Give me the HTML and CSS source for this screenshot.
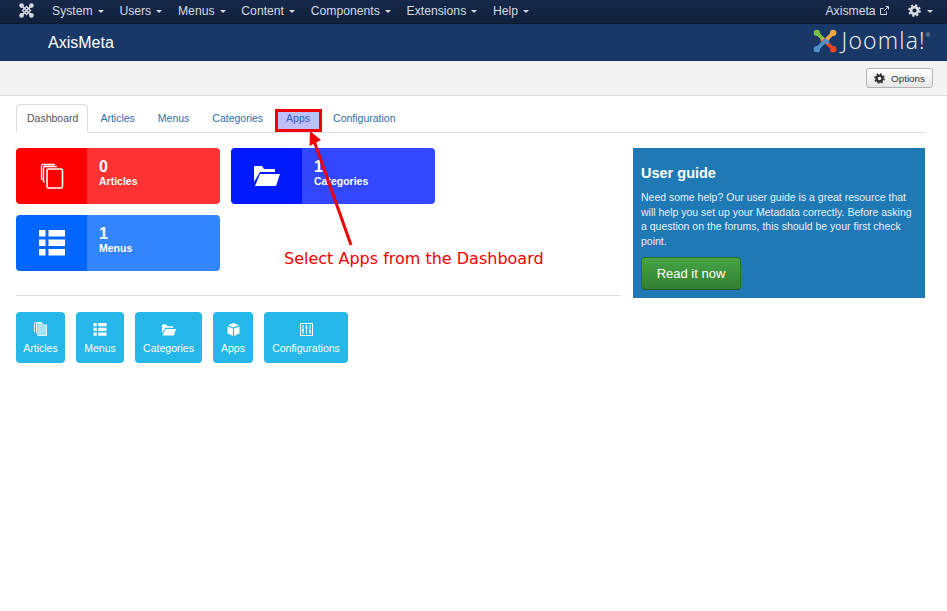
FILE: index.html
```html
<!DOCTYPE html>
<html lang="en">
<head>
<meta charset="UTF-8" />
<title>AxisMeta - Dashboard</title>
<link rel="stylesheet" href="styles.css">
</head>
<body>
<svg class="sprites" width="0" height="0">
  <symbol id="i-gear" viewBox="0 0 16 16">
    <g fill="none" stroke="currentColor">
      <circle cx="8" cy="8" r="4.300" stroke-width="3.400"/>
      <circle cx="8" cy="8" r="6.600" stroke-width="2.400" stroke-dasharray="2.600 2.584"/>
    </g>
  </symbol>
</svg>

<nav class="topbar">
  <svg class="topbar-logo" width="15" height="15" viewBox="0 0 15 15">
    <g fill="none" stroke="#d5dae2" stroke-width="1.700">
      <path d="M3 3l9 9M12 3l-9 9"/>
      <path d="M7.500 3.500l4 4-4 4-4-4z" stroke-width="1.300"/>
    </g>
    <g fill="#d5dae2">
      <circle cx="2.600" cy="2.600" r="2.300"/>
      <circle cx="12.400" cy="2.600" r="2.300"/>
      <circle cx="2.600" cy="12.400" r="2.300"/>
      <circle cx="12.400" cy="12.400" r="2.300"/>
    </g>
  </svg>
  <ul class="topmenu">
    <li>System<span class="caret"></span></li>
    <li>Users<span class="caret"></span></li>
    <li>Menus<span class="caret"></span></li>
    <li>Content<span class="caret"></span></li>
    <li>Components<span class="caret"></span></li>
    <li>Extensions<span class="caret"></span></li>
    <li>Help<span class="caret"></span></li>
  </ul>
  <div class="topbar-right">
    <span class="site-link">Axismeta
      <svg width="9" height="9" viewBox="0 0 9 9"><path fill="none" stroke="#d5dae2" stroke-width="1" d="M6.500 5.500v3H.500v-6h3M4 5l4-4M5.500.500h3v3"/></svg>
    </span>
    <span class="user-menu">
      <svg width="13" height="13"><use href="#i-gear"/></svg><span class="caret"></span>
    </span>
  </div>
</nav>

<header class="brandbar">
  <h1>AxisMeta</h1>
  <div class="brand-logo">
    <svg width="24" height="24" viewBox="0 0 25 25" fill="none" stroke-width="3.800">
      <path stroke="#7ac143" d="M4 4l9 9 3-3"/>
      <path stroke="#f9a541" d="M21 4l-9 9-3-3"/>
      <path stroke="#f44321" d="M21 21l-9-9-3 3"/>
      <path stroke="#5091cd" d="M4 21l9-9 3 3"/>
      <circle cx="4" cy="4" r="3.300" fill="#7ac143" stroke="none"/>
      <circle cx="21" cy="4" r="3.300" fill="#f9a541" stroke="none"/>
      <circle cx="21" cy="21" r="3.300" fill="#f44321" stroke="none"/>
      <circle cx="4" cy="21" r="3.300" fill="#5091cd" stroke="none"/>
    </svg>
    <span class="brand-name">Joomla!<sup>®</sup></span>
  </div>
</header>

<div class="toolbar">
  <button class="options-btn"><svg width="11" height="11"><use href="#i-gear"/></svg>Options</button>
</div>

<main class="content">
  <ul class="tabs">
    <li class="active">Dashboard</li>
    <li>Articles</li>
    <li>Menus</li>
    <li>Categories</li>
    <li class="apps-tab">Apps</li>
    <li>Configuration</li>
  </ul>

  <div class="columns">
    <section class="left-col">
      <div class="tiles">
        <div class="tile tile-red">
          <div class="tile-icon">
            <svg width="24" height="26" viewBox="0 0 24 26" fill="none" stroke="#fff" stroke-width="1.300"><path d="M15 1.500H2.500a1.500 1.500 0 0 0-1 1V15a2 2 0 0 0 1 2M17 3.500H5a1.500 1.500 0 0 0-1.500 1.500V18a2 2 0 0 0 1 1.500"/><rect x="7" y="6" width="15.500" height="19" rx="1.500" stroke-width="1.600"/></svg>
          </div>
          <div class="tile-body"><b>0</b><span>Articles</span></div>
        </div>
        <div class="tile tile-blue">
          <div class="tile-icon">
            <svg width="26" height="22" viewBox="0 0 26 22" fill="#fff"><path d="M0 2q0-1 1-1h7l2 3h10q1 0 1 1v2H6L0 17z"/><path d="M1 21l5-12h20l-4 12z"/></svg>
          </div>
          <div class="tile-body"><b>1</b><span>Categories</span></div>
        </div>
        <div class="tile tile-sky">
          <div class="tile-icon">
            <svg width="26" height="26" viewBox="0 0 26 26" fill="#fff"><path d="M0 0h6.500v6.500H0zM9.500 0H26v6.500H9.500zM0 9.500h6.500V16H0zM9.500 9.500H26V16H9.500zM0 19h6.500v6.500H0zM9.500 19H26v6.500H9.500z"/></svg>
          </div>
          <div class="tile-body"><b>1</b><span>Menus</span></div>
        </div>
      </div>

      <hr class="divider">

      <div class="quick-links">
        <a class="quick">
          <svg width="13" height="14" viewBox="0 0 13 14" fill="none" stroke="#fff" stroke-width="1" opacity=".85"><path d="M8 .500H1a.500.500 0 0 0-.500.500v9"/><path d="M9 1.500H2.500v10"/><rect x="4" y="3" width="8.500" height="10.500" fill="#bfe8f7"/></svg>
          Articles</a>
        <a class="quick">
          <svg width="14" height="13" viewBox="0 0 26 26" fill="#fff"><path d="M0 0h6.500v6.500H0zM9.500 0H26v6.500H9.500zM0 9.500h6.500V16H0zM9.500 9.500H26V16H9.500zM0 19h6.500v6.500H0zM9.500 19H26v6.500H9.500z"/></svg>
          Menus</a>
        <a class="quick">
          <svg width="14" height="12" viewBox="0 0 26 22" fill="#fff"><path d="M0 2q0-1 1-1h7l2 3h10q1 0 1 1v2H6L0 17z"/><path d="M1 21l5-12h20l-4 12z"/></svg>
          Categories</a>
        <a class="quick">
          <svg width="13" height="13" viewBox="0 0 13 13" fill="#fff"><path d="M6.500 0L12 2.200 6.500 4.400 1 2.200zM.500 3.400l5.500 2.200V13L.500 10.600zM12.500 3.400L7 5.600V13l5.500-2.400z"/></svg>
          Apps</a>
        <a class="quick">
          <svg width="13" height="13" viewBox="0 0 13 13" fill="none" stroke="#fff"><rect x=".500" y=".500" width="12" height="12"/><path d="M3 2v9M6.500 2v9M10 2v9" stroke-width="1"/><path d="M2 7.500h2M5.500 5h2M9 8.500h2" stroke-width="1.600"/></svg>
          Configurations</a>
      </div>
    </section>

    <aside class="guide">
      <h3>User guide</h3>
      <p>Need some help? Our user guide is a great resource that will help you set up your Metadata correctly. Before asking a question on the forums, this should be your first check point.</p>
      <a class="guide-btn">Read it now</a>
    </aside>
  </div>
</main>

<!-- annotation drawn over the screenshot -->
<div class="note-box"></div>
<svg class="note-arrow" width="60" height="125" viewBox="0 0 60 125">
  <path d="M7 8L45 115" stroke="#f00000" stroke-width="3" fill="none"/>
  <path d="M4 1L3.500 16 15 10z" fill="#f00000"/>
</svg>
<div class="note-text">Select Apps from the Dashboard</div>
</body>
</html>
```

FILE: styles.css
```css
* {
  box-sizing: border-box;
}
body {
  margin: 0;
  background: #fff;
  color: #333;
  font-family: 'Liberation Sans', Arial, sans-serif;
  font-size: 12px;
  position: relative;
  min-height: 611px;
}
.sprites {
  position: absolute;
}
ul {
  list-style: none;
  margin: 0;
  padding: 0;
}

/* top nav */
.topbar {
  height: 24px;
  background: linear-gradient(#17284a, #10203c);
  border-bottom: 1px solid #0c1a30;
  color: #d5dae2;
  font-size: 12.200px;
  display: flex;
  align-items: center;
  padding: 0 14px 2px 19px;
}
.topbar-logo {
  margin-right: 18px;
}
.topmenu {
  display: flex;
  gap: 15.750px;
}
.topmenu li {
  display: flex;
  align-items: center;
}
.caret {
  display: inline-block;
  width: 0;
  height: 0;
  margin-left: 5px;
  margin-top: 1px;
  border-left: 3px solid transparent;
  border-right: 3px solid transparent;
  border-top: 3px solid #d5dae2;
}
.topbar-right {
  margin-left: auto;
  display: flex;
  align-items: center;
  gap: 19px;
}
.site-link svg {
  margin-left: 1px;
}
.user-menu {
  display: flex;
  align-items: center;
  color: #d5dae2;
}
.user-menu .caret {
  margin-left: 6px;
}

/* brand bar */
.brandbar {
  height: 37px;
  background: #1a3867;
  color: #fff;
  display: flex;
  align-items: center;
  justify-content: space-between;
  padding: 0 17px 0 48px;
}
.brandbar h1 {
  margin: 0;
  font-size: 16px;
  font-weight: 400;
}
.brand-logo {
  display: flex;
  align-items: center;
  gap: 5px;
  margin-top: -4px;
}
.brand-name {
  font-family: 'Open Sans', sans-serif;
  font-weight: 300;
  font-size: 23px;
  line-height: 25px;
  letter-spacing: 1.200px;
  color: #f2f4f7;
}
.brand-name sup {
  font-size: 5px;
  letter-spacing: 0;
  vertical-align: 12px;
  line-height: 0;
}

/* toolbar */
.toolbar {
  height: 35px;
  background: #f3f3f3;
  border-bottom: 1px solid #dcdcdc;
  display: flex;
  justify-content: flex-end;
  align-items: flex-start;
  padding: 7px 14px 0 0;
}
.options-btn {
  width: 67px;
  height: 20px;
  padding: 0;
  display: flex;
  align-items: center;
  justify-content: center;
  gap: 6px;
  background: linear-gradient(#fff, #e6e6e6);
  border: 1px solid #b3b3b3;
  border-radius: 3px;
  color: #333;
  font-family: inherit;
  font-size: 9.800px;
}

/* main */
.content {
  padding: 8px 22px 0 16px;
}
.tabs {
  display: flex;
  height: 29px;
  border-bottom: 1px solid #ddd;
}
.tabs li {
  padding: 8px 11px 0;
  margin-right: 1px;
  height: 28px;
  font-size: 10.500px;
  color: #2a6fb0;
}
.tabs li.active {
  height: 29px;
  color: #555;
  background: #fff;
  border: 1px solid #ddd;
  border-bottom-color: #fff;
  border-radius: 4px 4px 0 0;
  padding: 7px 9px 0 10px;
}
.columns {
  display: flex;
  gap: 12px;
  margin-top: 15px;
}
.left-col {
  width: 605px;
}
.tiles {
  display: grid;
  grid-template-columns: 204px 204px;
  grid-auto-rows: 56px;
  gap: 11px;
}
.tile {
  display: flex;
  border-radius: 4px;
  overflow: hidden;
  color: #fff;
}
.tile-icon {
  width: 71px;
  display: flex;
  align-items: center;
  justify-content: center;
}
.tile-body {
  flex: 1;
  padding: 11px 12px 0;
  display: flex;
  flex-direction: column;
}
.tile-body b {
  font-size: 16px;
  line-height: 15px;
}
.tile-body span {
  font-size: 10.500px;
  font-weight: 700;
  line-height: 14px;
}
.tile-red .tile-icon { background: #ff0000; }
.tile-red .tile-body { background: #ff3333; }
.tile-blue .tile-icon { background: #0019ff; }
.tile-blue .tile-body { background: #3347ff; }
.tile-sky .tile-icon { background: #0066ff; }
.tile-sky .tile-body { background: #3385ff; }

.divider {
  margin: 24px 0 16px;
  border: 0;
  border-top: 1px solid #ddd;
}
.quick-links {
  display: grid;
  grid-template-columns: 49px 48px 67px 40px 84px;
  gap: 11px;
}
.quick {
  height: 51px;
  padding-bottom: 9px;
  display: flex;
  flex-direction: column;
  align-items: center;
  justify-content: flex-end;
  gap: 6px;
  background: #24b7e8;
  border-radius: 4px;
  color: #fff;
  font-size: 10.500px;
  line-height: 12px;
}
.guide {
  width: 292px;
  height: 150px;
  background: #1e79b5;
  color: #e6f0f7;
  padding: 16px 8px 0;
}
.guide h3 {
  margin: 0 0 8px;
  color: #fff;
  font-size: 14.500px;
  line-height: 18px;
}
.guide p {
  margin: 0 0 9px;
  font-size: 10.500px;
  line-height: 14.500px;
}
.guide-btn {
  display: block;
  width: 100px;
  height: 33px;
  line-height: 32px;
  text-align: center;
  color: #fff;
  font-size: 13px;
  background: linear-gradient(#46a546, #327f32);
  border: 1px solid #2c6e2c;
  border-bottom-color: #1f5a1f;
  border-radius: 4px;
}

/* annotation */
.note-box {
  position: absolute;
  left: 275px;
  top: 109px;
  width: 47px;
  height: 23px;
  border: 3px solid #f00000;
  background: rgba(60, 60, 240, 0.33);
}
.note-arrow {
  position: absolute;
  left: 306px;
  top: 130px;
}
.note-text {
  position: absolute;
  left: 284px;
  top: 249px;
  font-family: 'DejaVu Sans', sans-serif;
  font-size: 16px;
  line-height: 20px;
  color: #f00000;
}
```
